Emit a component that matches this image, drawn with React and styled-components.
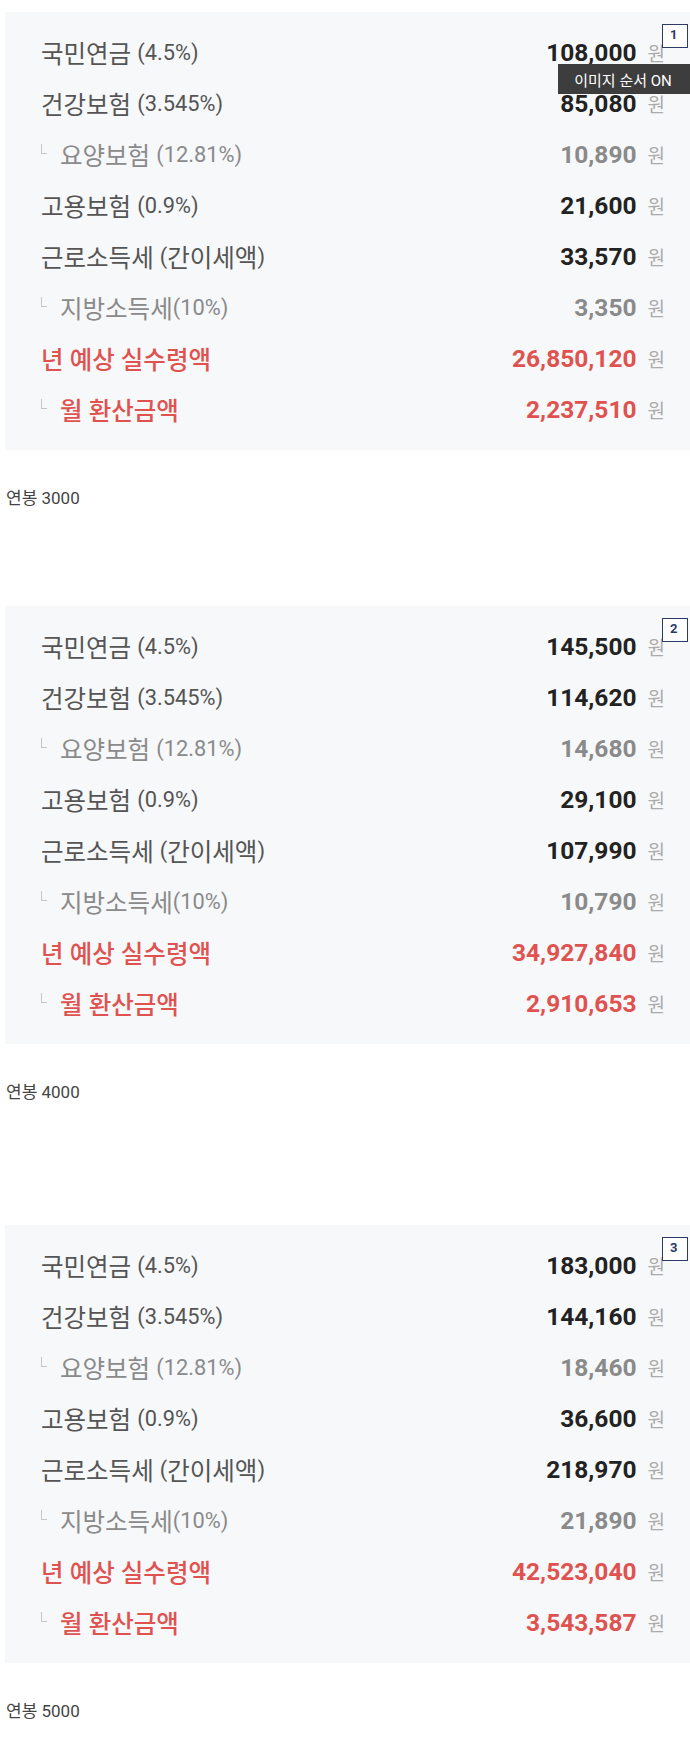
import React from "react";
import styled, { createGlobalStyle } from "styled-components";

const GlobalStyle = createGlobalStyle`
  html, body { margin: 0; padding: 0; background: #ffffff; }
  body { font-family: Roboto, "Noto Sans CJK KR", sans-serif; }
`;

const Page = styled.div`
  padding-top: 12px;
  width: 690px;
`;

const Section = styled.section`
  margin-bottom: ${(p) => p.$gap}px;
`;

const Card = styled.div`
  position: relative;
  margin-left: 5px;
  background: #f7f8fa;
  padding: 15px 25px 15px 36px;
`;

const Row = styled.div`
  display: flex;
  align-items: center;
  justify-content: space-between;
  height: 51px;
`;

const colors = {
  main: { label: "#555555", value: "#222222" },
  sub: { label: "#8a8a8a", value: "#8a8a8a" },
  red: { label: "#e0524f", value: "#e0524f" },
};

const Label = styled.span`
  display: flex;
  align-items: center;
  white-space: pre;
  font-size: 24.5px;
  color: ${(p) => colors[p.$kind].label};
  font-weight: ${(p) => (p.$kind === "red" ? 500 : 400)};
`;

const Latin = styled.span`
  font-size: 21.8px;
`;

const Branch = styled.span`
  width: 5px;
  height: 9px;
  border-left: 1px solid #c6c6c6;
  border-bottom: 1px solid #c6c6c6;
  margin: 0 13px 12px 0;
`;

const ValueWrap = styled.span`
  display: flex;
  align-items: baseline;
`;

const Value = styled.span`
  font-size: 24.5px;
  font-weight: 700;
  color: ${(p) => colors[p.$kind].value};
`;

const Unit = styled.span`
  font-size: 19px;
  color: #ababab;
  margin-left: 11px;
`;

const Badge = styled.div`
  position: absolute;
  top: 12px;
  right: 2px;
  width: 26px;
  height: 24px;
  box-sizing: border-box;
  background: #ffffff;
  border: 1px solid #2d3a66;
  color: #2d3a66;
  font-size: 13px;
  font-weight: 700;
  padding: 3px 0 0 7px;
  line-height: 1;
`;

const Tooltip = styled.div`
  position: absolute;
  top: 52px;
  right: 0;
  width: 132px;
  height: 30px;
  background: #3d3d3d;
  color: #ffffff;
  font-size: 15px;
  display: flex;
  align-items: center;
  justify-content: center;
  box-sizing: border-box;
  padding-right: 2px;
`;

const Caption = styled.p`
  margin: 38px 0 0 6px;
  font-size: 17px;
  line-height: 20px;
  color: #444444;
`;

const data = [
  {
    salary: "3000",
    gap: 98,
    values: ["108,000", "85,080", "10,890", "21,600", "33,570", "3,350", "26,850,120", "2,237,510"],
  },
  {
    salary: "4000",
    gap: 123,
    values: ["145,500", "114,620", "14,680", "29,100", "107,990", "10,790", "34,927,840", "2,910,653"],
  },
  {
    salary: "5000",
    gap: 0,
    values: ["183,000", "144,160", "18,460", "36,600", "218,970", "21,890", "42,523,040", "3,543,587"],
  },
];

const rows = [
  { label: "국민연금 (4.5%)", kind: "main" },
  { label: "건강보험 (3.545%)", kind: "main" },
  { label: "요양보험 (12.81%)", kind: "sub", branch: true },
  { label: "고용보험 (0.9%)", kind: "main" },
  { label: "근로소득세 (간이세액)", kind: "main" },
  { label: "지방소득세(10%)", kind: "sub", branch: true },
  { label: "년 예상 실수령액", kind: "red" },
  { label: "월 환산금액", kind: "red", branch: true },
];

function LabelText({ text }) {
  const parts = text.split(/([^\uAC00-\uD7A3\s]+)/);
  return parts.map((p, k) =>
    k % 2 === 1 ? <Latin key={k}>{p}</Latin> : <React.Fragment key={k}>{p}</React.Fragment>
  );
}

export default function App() {
  return (
    <Page>
      <GlobalStyle />
      {data.map((d, i) => (
        <Section key={d.salary} $gap={d.gap}>
          <Card>
            {rows.map((r, j) => (
              <Row key={r.label}>
                <Label $kind={r.kind}>
                  {r.branch && <Branch />}
                  <LabelText text={r.label} />
                </Label>
                <ValueWrap>
                  <Value $kind={r.kind}>{d.values[j]}</Value>
                  <Unit>원</Unit>
                </ValueWrap>
              </Row>
            ))}
            <Badge>{i + 1}</Badge>
            {i === 0 && <Tooltip>이미지 순서 ON</Tooltip>}
          </Card>
          <Caption>연봉 {d.salary}</Caption>
        </Section>
      ))}
    </Page>
  );
}
